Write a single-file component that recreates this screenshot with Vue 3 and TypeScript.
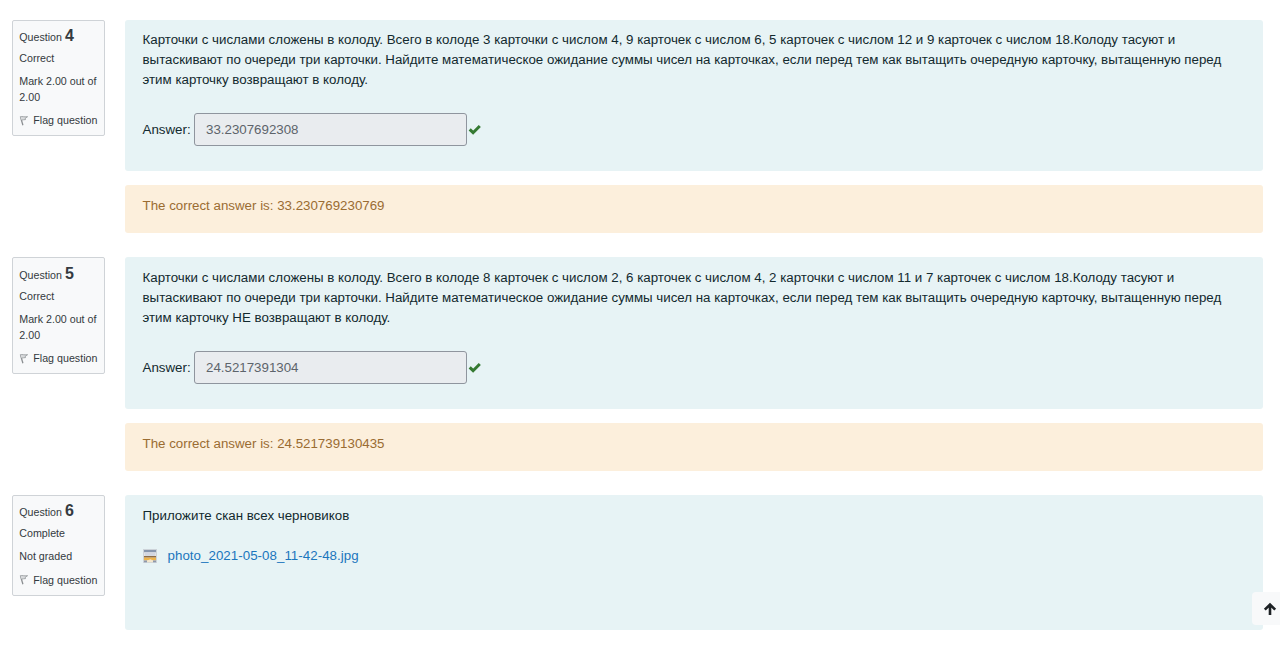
<script setup lang="ts">
interface Question {
  number: number
  state: string
  grade: string
  lines: string[]
  answer?: string
  correct?: string
  file?: string
}

const questions: Question[] = [
  {
    number: 4,
    state: 'Correct',
    grade: 'Mark 2.00 out of 2.00',
    lines: [
      'Карточки с числами сложены в колоду. Всего в колоде 3 карточки с числом 4, 9 карточек с числом 6, 5 карточек с числом 12 и 9 карточек с числом 18.Колоду тасуют и',
      'вытаскивают по очереди три карточки. Найдите математическое ожидание суммы чисел на карточках, если перед тем как вытащить очередную карточку, вытащенную перед',
      'этим карточку возвращают в колоду.',
    ],
    answer: '33.2307692308',
    correct: '33.230769230769',
  },
  {
    number: 5,
    state: 'Correct',
    grade: 'Mark 2.00 out of 2.00',
    lines: [
      'Карточки с числами сложены в колоду. Всего в колоде 8 карточек с числом 2, 6 карточек с числом 4, 2 карточки с числом 11 и 7 карточек с числом 18.Колоду тасуют и',
      'вытаскивают по очереди три карточки. Найдите математическое ожидание суммы чисел на карточках, если перед тем как вытащить очередную карточку, вытащенную перед',
      'этим карточку НЕ возвращают в колоду.',
    ],
    answer: '24.5217391304',
    correct: '24.521739130435',
  },
  {
    number: 6,
    state: 'Complete',
    grade: 'Not graded',
    lines: ['Приложите скан всех черновиков'],
    file: 'photo_2021-05-08_11-42-48.jpg',
  },
]
</script>

<template>
  <main class="page">
    <section v-for="q in questions" :key="q.number" class="question">
      <aside class="info">
        <h3 class="no">Question <span class="qno">{{ q.number }}</span></h3>
        <div class="state">{{ q.state }}</div>
        <div class="grade">{{ q.grade }}</div>
        <a class="flag">
          <svg class="flag-icon" viewBox="0 0 10 11">
            <path d="M1.4 1.6 3.9 10.2" fill="none" stroke="#8b8f92" stroke-width="1.3" />
            <path d="M1.4 1.8C3.4 1 4.6 2.3 8.6 1.7L6.3 3.2 6.5 4.6C5 5 4 4.5 2.4 5.1" fill="#d9dbdd" stroke="#9b9fa2" stroke-width=".9" />
          </svg>
          <span>Flag question</span>
        </a>
      </aside>
      <div class="content">
        <div class="formulation" :class="{ essay: q.file }">
          <p class="qtext"><span v-for="line in q.lines" :key="line" class="line">{{ line }}</span></p>
          <div v-if="q.answer" class="answer-row">
            <label :for="'answer' + q.number">Answer:</label>
            <input :id="'answer' + q.number" class="answer" type="text" :value="q.answer" readonly />
            <svg class="check" viewBox="0 0 14 12">
              <path d="M2.7 5.4 6.1 8.7 12.8 2" fill="none" stroke="#357a32" stroke-width="3" />
            </svg>
          </div>
          <div v-if="q.file" class="file-row">
            <svg class="file-icon" viewBox="0 0 14 14">
              <rect x=".5" y=".5" width="13" height="13" fill="#dfe2e5" stroke="#cdd3d9" />
              <rect x="1" y="1" width="12" height="2.2" fill="#8796ad" />
              <rect x="2" y="3.2" width="10" height="3.6" fill="#d2d6e0" />
              <path d="M1 7h12v1.6H1z" fill="#8c6c48" />
              <path d="M1 8.6h12v2.8H1z" fill="#edb44c" />
              <path d="M4 13.2V11.6l3.5-1.4 2.5 1.4v1.6z" fill="#f3e6cc" />
              <path d="M1 11.4h3v1.8H1zM10 11.4h3v1.8h-3z" fill="#8d98ac" />
            </svg>
            <a class="file-link">{{ q.file }}</a>
          </div>
        </div>
        <div v-if="q.correct" class="outcome">The correct answer is: {{ q.correct }}</div>
      </div>
    </section>
    <button class="to-top" aria-label="Scroll to top">
      <svg viewBox="0 0 14 14">
        <path d="M7 13V3M1.8 7.7 7 2.5 12.2 7.7" fill="none" stroke="#1d2125" stroke-width="2.6" />
      </svg>
    </button>
  </main>
</template>

<style>
body {
  background: #fff;
  overflow: hidden;
}
</style>

<style scoped>
.page {
  box-sizing: border-box;
  height: 658px;
  padding: 19.6px 17px 0 11.5px;
  font: 13.325px/19.9px "Liberation Sans", Arial, sans-serif;
}
.question {
  display: flex;
  align-items: flex-start;
  gap: 20px;
  margin-bottom: 24px;
}
.info {
  box-sizing: border-box;
  width: 93.5px;
  flex: none;
  padding: 6.3px 0 7px 6.8px;
  border: 1px solid #cfd3d7;
  border-radius: 2px;
  background: #f8f9fa;
  color: #343a40;
  font-size: 10.68px;
  line-height: 16px;
}
.no {
  display: flex;
  align-items: baseline;
  gap: 3px;
  height: 18px;
  margin: 0;
  font-size: 10.65px;
  font-weight: 400;
  line-height: 17px;
}
.qno {
  font-size: 16px;
  font-weight: 700;
  line-height: 17px;
}
.state {
  margin-top: 5px;
}
.grade {
  margin-top: 7px;
}
.flag {
  display: flex;
  align-items: center;
  margin-top: 7.5px;
  white-space: nowrap;
}
.flag-icon {
  width: 10px;
  height: 11px;
  margin-right: 4px;
}
.content {
  flex: 1;
  min-width: 0;
}
.formulation {
  box-sizing: border-box;
  height: 151.3px;
  padding: 10.6px 17.5px;
  border-radius: 3px;
  background: #e7f3f5;
  color: #12292e;
}
.essay {
  height: 135.5px;
}
.qtext {
  margin: 0;
}
.line {
  display: block;
  white-space: nowrap;
}
.answer-row {
  display: flex;
  align-items: center;
  margin-top: 23.5px;
}
.answer {
  box-sizing: border-box;
  width: 273.5px;
  height: 33px;
  margin: 0 0 0 3.4px;
  padding: 0 11px;
  border: 1px solid #8f959e;
  border-radius: 3px;
  background: #e9ecef;
  color: #5d646b;
  font: inherit;
  outline: 0;
}
.check {
  width: 14px;
  height: 12px;
}
.file-row {
  display: flex;
  align-items: center;
  margin-top: 20.2px;
}
.file-icon {
  width: 14px;
  height: 14px;
  margin-right: 11px;
}
.file-link {
  color: #1b76bd;
  letter-spacing: 0.04px;
}
.outcome {
  box-sizing: border-box;
  height: 48px;
  margin-top: 14.4px;
  padding: 10.6px 17.5px;
  border-radius: 3px;
  background: #fcefdc;
  color: #9a6c32;
}
.to-top {
  position: fixed;
  right: -7px;
  bottom: 33px;
  width: 35px;
  height: 33px;
  padding: 0 0 0 11px;
  border: 0;
  border-radius: 4px;
  background: #f8f9fa;
}
.to-top svg {
  display: block;
  width: 14px;
  height: 14px;
}
</style>
